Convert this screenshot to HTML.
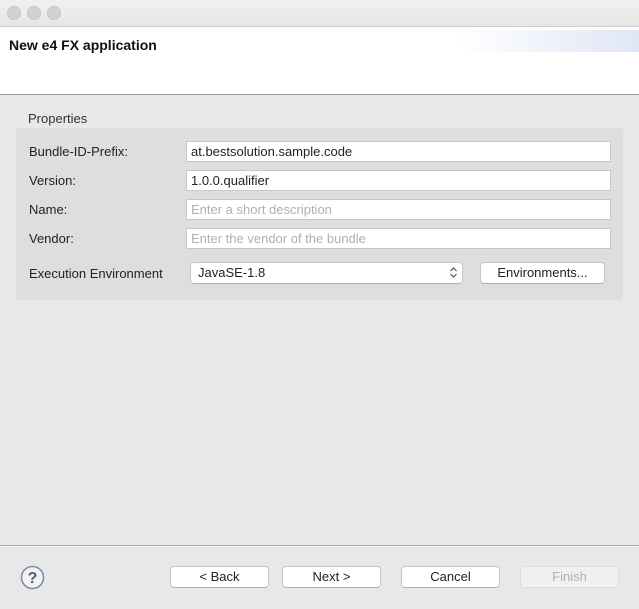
<!DOCTYPE html>
<html><head><style>
*{box-sizing:border-box;margin:0;padding:0}
body{width:639px;height:609px;overflow:hidden;background:#e8e8e8;font-family:"Liberation Sans",sans-serif;font-size:13px;color:#222;position:relative}
.a{position:absolute}
.tb{left:0;top:0;width:639px;height:27px;background:linear-gradient(#f0f0f0,#e6e6e6);border-bottom:1px solid #d0d0d0}
.dot{width:14px;height:14px;border-radius:50%;background:#d2d2d2;border:1px solid #c6c6c6;top:6px}
.hdr{left:0;top:27px;width:639px;height:68px;background:#fff;border-bottom:1px solid #9a9a9a}
.grad{right:0;top:30px;width:180px;height:22px;background:linear-gradient(90deg,rgba(255,255,255,0),#dfe6f5)}
.grp{left:16px;top:128px;width:607px;height:172px;background:#dedede;border-radius:4px}
.lbl{left:29px;font-size:13px}
.fld{left:186px;width:425px;height:21px;background:#fff;border:1px solid #c8c8c8;padding-left:4px;line-height:19px;font-size:13px}
.ph{color:#b0b0b0}
.btn{height:22px;background:#fff;border:1px solid #c6c6c6;border-bottom-color:#b0b0b0;border-radius:4px;text-align:center;line-height:20px;font-size:13px}
</style></head><body>
<div class="a tb"></div>
<div class="a dot" style="left:7px"></div>
<div class="a dot" style="left:27px"></div>
<div class="a dot" style="left:47px"></div>
<div class="a hdr"></div>
<div class="a grad"></div>
<div class="a" style="left:9px;top:37px;font-weight:bold;font-size:14px;color:#111">New e4 FX application</div>
<div class="a" style="left:28px;top:111px;font-size:13px;color:#333">Properties</div>
<div class="a grp"></div>
<div class="a lbl" style="top:144px">Bundle-ID-Prefix:</div>
<div class="a fld" style="top:141px">at.bestsolution.sample.code</div>
<div class="a lbl" style="top:173px">Version:</div>
<div class="a fld" style="top:170px">1.0.0.qualifier</div>
<div class="a lbl" style="top:202px">Name:</div>
<div class="a fld ph" style="top:199px">Enter a short description</div>
<div class="a lbl" style="top:231px">Vendor:</div>
<div class="a fld ph" style="top:228px">Enter the vendor of the bundle</div>
<div class="a lbl" style="top:266px">Execution Environment</div>
<div class="a btn" style="left:190px;top:262px;width:273px;text-align:left;padding-left:7px">JavaSE-1.8</div>
<svg class="a" style="left:449px;top:266px" width="9" height="13"><path d="M1.5 5L4.5 2 7.5 5M1.5 8L4.5 11 7.5 8" fill="none" stroke="#555" stroke-width="1.2"/></svg>
<div class="a btn" style="left:480px;top:262px;width:125px">Environments...</div>
<div class="a" style="left:0;top:545px;width:639px;height:2px;border-top:1px solid #a8a8a8;border-bottom:1px solid #f4f4f4"></div>
<svg class="a" style="left:20px;top:565px" width="25" height="25"><circle cx="12.5" cy="12.5" r="11" fill="#f2f2f2" stroke="#7e8da3" stroke-width="1.6"/><text x="12.5" y="18" text-anchor="middle" font-family="Liberation Sans" font-weight="bold" font-size="16" fill="#4d5f7a">?</text></svg>
<div class="a btn" style="left:170px;top:566px;width:99px">&lt; Back</div>
<div class="a btn" style="left:282px;top:566px;width:99px">Next &gt;</div>
<div class="a btn" style="left:401px;top:566px;width:99px">Cancel</div>
<div class="a btn" style="left:520px;top:566px;width:99px;background:#f0f0f0;color:#b0b0b0;border-color:#dcdcdc">Finish</div>
</body></html>
